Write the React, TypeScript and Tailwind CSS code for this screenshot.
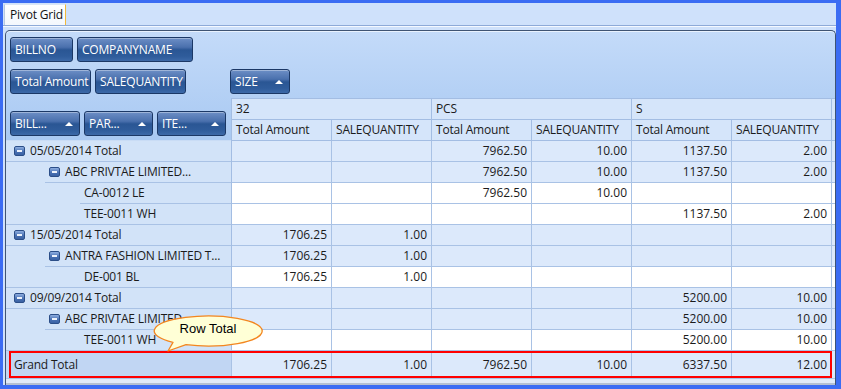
import React from "react";

type Row = {
  label: string;
  icon?: boolean;
  indent: number; // text/icon start relative to row header left
  border: number; // bottom border start
  tint: boolean;
  v: string[];
};

const rows: Row[] = [
  { label: "05/05/2014 Total", icon: true, indent: 8, border: 0, tint: true, v: ["", "", "7962.50", "10.00", "1137.50", "2.00"] },
  { label: "ABC PRIVTAE LIMITED...", icon: true, indent: 43, border: 39, tint: true, v: ["", "", "7962.50", "10.00", "1137.50", "2.00"] },
  { label: "CA-0012 LE", indent: 78, border: 74, tint: false, v: ["", "", "7962.50", "10.00", "", ""] },
  { label: "TEE-0011 WH", indent: 78, border: 0, tint: false, v: ["", "", "", "", "1137.50", "2.00"] },
  { label: "15/05/2014 Total", icon: true, indent: 8, border: 0, tint: true, v: ["1706.25", "1.00", "", "", "", ""] },
  { label: "ANTRA FASHION LIMITED T...", icon: true, indent: 43, border: 39, tint: true, v: ["1706.25", "1.00", "", "", "", ""] },
  { label: "DE-001 BL", indent: 78, border: 0, tint: false, v: ["1706.25", "1.00", "", "", "", ""] },
  { label: "09/09/2014 Total", icon: true, indent: 8, border: 0, tint: true, v: ["", "", "", "", "5200.00", "10.00"] },
  { label: "ABC PRIVTAE LIMITED...", icon: true, indent: 43, border: 39, tint: true, v: ["", "", "", "", "5200.00", "10.00"] },
  { label: "TEE-0011 WH", indent: 78, border: 0, tint: false, v: ["", "", "", "", "5200.00", "10.00"] },
];

const grand = ["1706.25", "1.00", "7962.50", "10.00", "6337.50", "12.00"];

function Arrow() {
  return (
    <span className="w-0 h-0 border-l-[4px] border-r-[4px] border-b-[4px] border-l-transparent border-r-transparent border-b-white" />
  );
}

function FieldButton({ label, w, sort }: { label: string; w: string; sort?: boolean }) {
  return (
    <div
      className={`${w} h-[25px] rounded-[3px] border border-[#1b3866] bg-[linear-gradient(to_bottom,#6d8fc6_0%,#4a70ad_40%,#2a5694_52%,#2f5c9b_80%,#3c69a8_100%)] shadow-[inset_0_1px_0_rgba(255,255,255,0.35)] flex items-center justify-between pl-[4px] pr-[6px] text-white text-[12px] leading-none shrink-0`}
    >
      <span className="whitespace-nowrap tracking-[-0.2px]">{label}</span>
      {sort ? <Arrow /> : null}
    </div>
  );
}

function Collapse() {
  return (
    <div className="w-[11px] h-[10px] rounded-[2px] border border-[#2b4e88] bg-[linear-gradient(to_bottom,#8eaee0,#4a72b4_55%,#3a62a4)] flex items-center justify-center shrink-0 mr-[5px]">
      <div className="w-[5px] h-[2px] bg-[#eef3fb]" />
    </div>
  );
}

export default function App() {
  return (
    <div className="relative w-[841px] h-[389px] bg-[#3b6cf3] pt-[3px] pl-[3px] pr-[5px] pb-[4px] font-['Open_Sans','Noto_Sans',sans-serif] text-[12px] text-[#1b1b1b] overflow-hidden">
      <div className="w-full h-full bg-[#cfe1fb] flex flex-col">
        {/* tab strip */}
        <div className="h-[22px] flex items-end pl-[1px]">
          <div className="h-[21px] w-[62px] border-t border-l border-r border-t-[#dbe6f5] border-l-[#b9c9df] border-r-[#f1b93a] bg-[linear-gradient(to_bottom,#ffffff,#f3f7fd)] flex items-center pl-[5px] text-[12px] text-[#111] tracking-[-0.2px]">
            Pivot Grid
          </div>
        </div>
        <div className="h-[1px] bg-[#8eaad8]" />
        <div className="h-[1px] bg-[#f4f8ff]" />
        <div className="h-[3px]" />
        {/* panel */}
        <div className="ml-[2px] flex-1 flex flex-col border-t border-l border-r border-[#3f5473] rounded-t-[5px] bg-[linear-gradient(to_bottom,#c4dbf9,#a9c9f2_30%,#a8c8f1)] shadow-[inset_0_1px_0_#e9f2fe] overflow-hidden">
          <div className="pt-[6px] pl-[4px] flex gap-[4px]">
            <FieldButton label="BILLNO" w="w-[63px]" />
            <FieldButton label="COMPANYNAME" w="w-[116px]" />
          </div>
          <div className="mt-[7px] flex">
            <div className="w-[224px] pl-[4px] flex gap-[4px]">
              <FieldButton label="Total Amount" w="w-[81px]" />
              <FieldButton label="SALEQUANTITY" w="w-[91px]" />
            </div>
            <FieldButton label="SIZE" w="w-[60px]" sort />
          </div>
          {/* header zone */}
          <div className="mt-[4px] flex h-[43px]">
            <div className="w-[225px] border-b border-[#c9dcf5] flex items-start pt-[13px] pl-[4px] gap-[4px]">
              <FieldButton label="BILL..." w="w-[70px]" sort />
              <FieldButton label="PAR..." w="w-[69px]" sort />
              <FieldButton label="ITE..." w="w-[69px]" sort />
            </div>
            <div className="flex-1 flex flex-col border-l border-t border-[#a3bde3] bg-[#d5e5fa] tracking-[-0.2px]">
              <div className="h-[21px] flex border-b border-[#a3bde3]">
                <div className="w-[200px] border-r border-[#a3bde3] pl-[4px] flex items-center">32</div>
                <div className="w-[200px] border-r border-[#a3bde3] pl-[4px] flex items-center">PCS</div>
                <div className="w-[200px] border-r border-[#a3bde3] pl-[4px] flex items-center">S</div>
                <div className="flex-1" />
              </div>
              <div className="h-[21px] flex border-b border-[#a3bde3]">
                {["Total Amount", "SALEQUANTITY", "Total Amount", "SALEQUANTITY", "Total Amount", "SALEQUANTITY"].map((t, i) => (
                  <div key={i} className="w-[100px] border-r border-[#a3bde3] pl-[4px] flex items-center whitespace-nowrap overflow-hidden">
                    {t}
                  </div>
                ))}
                <div className="flex-1" />
              </div>
            </div>
          </div>
          {/* data rows */}
          {rows.map((r, i) => (
            <div key={i} className="flex h-[21px]">
              <div className="w-[226px] border-r border-[#a3bde3] bg-[#d2e3f8] flex">
                <div
                  className="flex-1 border-b border-[#a9c2e5] flex items-center whitespace-nowrap overflow-hidden tracking-[-0.2px]"
                  style={{ marginLeft: r.border, paddingLeft: r.indent - r.border }}
                >
                  {r.icon ? <Collapse /> : null}
                  <span>{r.label}</span>
                </div>
              </div>
              {r.v.map((v, j) => (
                <div
                  key={j}
                  className={`w-[100px] border-r border-b border-[#a9c2e5] flex items-center justify-end pr-[4px] ${r.tint ? "bg-[#dce9fb]" : "bg-white"}`}
                >
                  {v}
                </div>
              ))}
              <div className={`flex-1 border-b border-[#a9c2e5] ${r.tint ? "bg-[#dce9fb]" : "bg-white"}`} />
            </div>
          ))}
          {/* grand total */}
          <div className="flex h-[28px]">
            <div className="w-[226px] border-r border-b border-[#a9c2e5] bg-[#c1d6f3] flex items-center pl-[8px] tracking-[-0.2px]">Grand Total</div>
            {grand.map((v, j) => (
              <div key={j} className="w-[100px] border-r border-b border-[#a9c2e5] bg-[#dce9fb] flex items-center justify-end pr-[4px]">
                {v}
              </div>
            ))}
            <div className="flex-1 border-b border-[#a9c2e5] bg-[#dce9fb]" />
          </div>
          <div className="flex-1 bg-[#e0eaf8] border-b-2 border-[#b4c0d2]" />
        </div>
      </div>

      {/* annotation: red highlight box */}
      <div className="absolute left-[9px] top-[351px] w-[823px] h-[27px] border-2 border-[#ff0000] pointer-events-none" />

      {/* annotation: callout */}
      <svg className="absolute left-[150px] top-[312px]" width="120" height="42" viewBox="0 0 120 42">
        <path
          d="M23 30.4 L18 39 L36 32.7 A54 15 0 1 0 23 30.4 Z"
          fill="#ffffd6"
          stroke="#f3861f"
          strokeWidth="1.3"
          strokeLinejoin="round"
        />
      </svg>
      <div className="absolute left-[154px] top-[321px] w-[108px] h-[16px] text-center leading-[16px] text-[13px] text-black font-['Liberation_Sans',Arial,sans-serif]">
        Row Total
      </div>
    </div>
  );
}
